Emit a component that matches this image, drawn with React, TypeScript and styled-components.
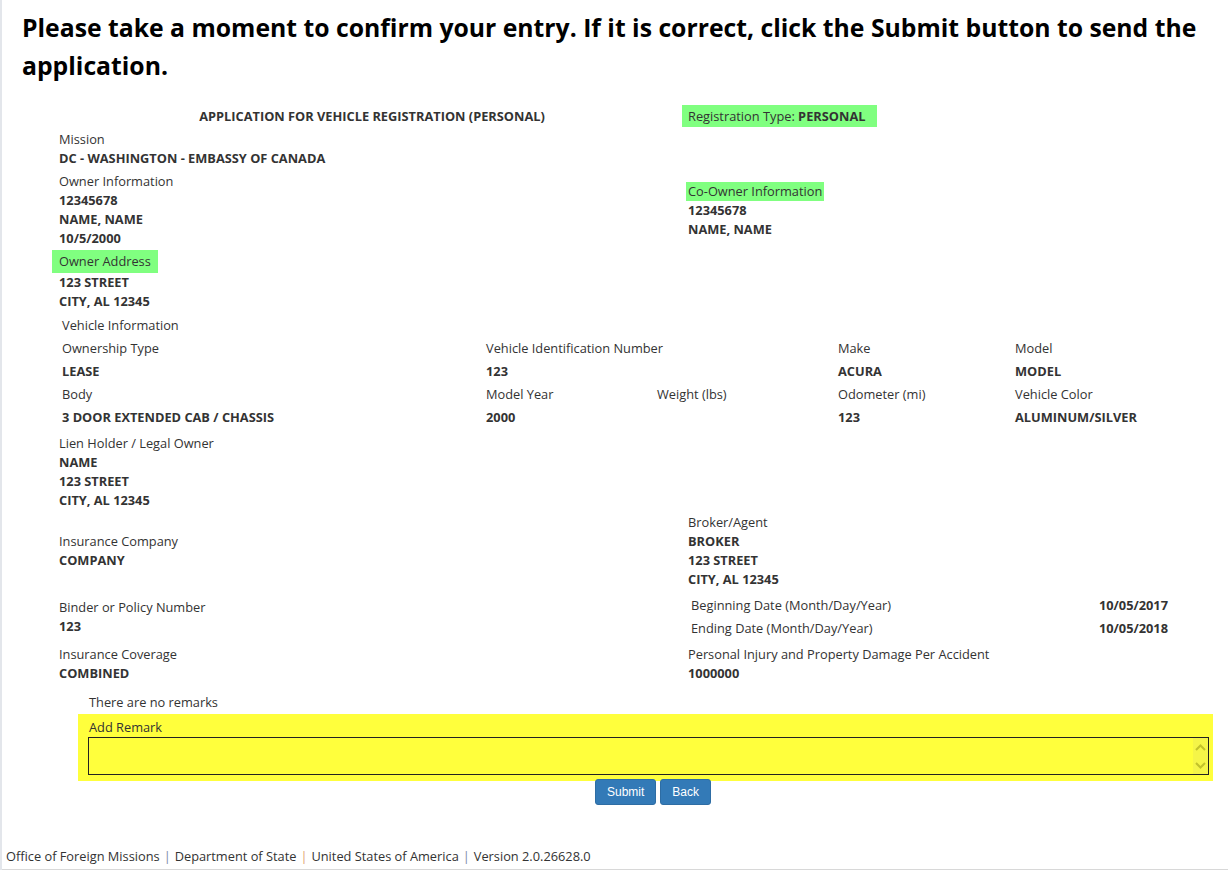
import React from 'react'
import styled, { createGlobalStyle } from 'styled-components'

const GlobalStyle = createGlobalStyle`
  html, body {
    margin: 0;
    padding: 0;
    background: #fff;
  }
  body {
    font-family: "Open Sans", "DejaVu Sans", sans-serif;
    font-size: 12.8px;
    color: #333;
  }
`

const Page = styled.div`
  min-height: 870px;
  box-sizing: border-box;
  border-left: 2px solid #e3e6eb;
  display: flex;
  flex-direction: column;
`

const Heading = styled.h2`
  margin: 0;
  padding: 9px 20px 0 20px;
  font-size: 24.75px;
  line-height: 38px;
  font-weight: 700;
  color: #000;
`

const Form = styled.div`
  padding: 20px 15px 0 50px;
`

const Row = styled.div<{ gap?: number }>`
  display: grid;
  grid-template-columns: 630px 1fr;
  align-items: center;
  margin-top: ${({ gap }) => gap ?? 4}px;
`

const Title = styled.div`
  text-align: center;
  font-weight: 700;
  padding-left: 10px;
  line-height: 22px;
`

const Group = styled.div<{ inset?: number }>`
  padding-left: ${({ inset }) => inset ?? 7}px;
  line-height: 19px;
`

const Label = styled.div`
  line-height: 19px;
`

const Value = styled.div`
  line-height: 19px;
  font-weight: 700;
`

const Highlight = styled.span<{ pad: string }>`
  display: inline-block;
  background: #80ff80;
  padding: ${({ pad }) => pad};
  line-height: 19px;
`

const HighlightLabel = styled.div<{ shift: number }>`
  margin-left: -${({ shift }) => shift}px;
`

const RegType = styled.span`
  display: inline-block;
  background: #80ff80;
  padding: 0 12px 0 6px;
  line-height: 22px;
  b {
    font-weight: 700;
  }
`

const VehicleTable = styled.div`
  display: grid;
  grid-template-columns: 424px 171px 181px 177px 1fr;
  margin-top: 3px;
  padding-left: 10px;
  grid-auto-rows: 23px;
  align-items: center;
`

const Cell = styled.div<{ span?: number; bold?: boolean }>`
  grid-column: span ${({ span }) => span ?? 1};
  font-weight: ${({ bold }) => (bold ? 700 : 400)};
  line-height: 19px;
`

const DateTable = styled.div`
  display: grid;
  grid-template-columns: 1fr auto;
  grid-auto-rows: 23px;
  align-items: center;
  width: 477px;
  padding-left: 3px;
`

const DateValue = styled.div`
  font-weight: 700;
  text-align: right;
`

const Remarks = styled.div`
  margin: 10px 0 0 87px;
  line-height: 19px;
`

const RemarkBox = styled.div`
  margin: 2px 0 0 76px;
  width: 1135px;
  box-sizing: border-box;
  background: #ffff3c;
  padding: 4px 4px 6px 10px;
`

const RemarkLabel = styled.div`
  padding-left: 1px;
  line-height: 19px;
`

const AreaWrap = styled.div`
  position: relative;
  height: 38px;
`

const RemarkArea = styled.textarea`
  display: block;
  width: 100%;
  height: 38px;
  box-sizing: border-box;
  border: 1px solid #222;
  background: transparent;
  resize: none;
  font: inherit;
  outline: none;
`

const ScrollStrip = styled.div`
  position: absolute;
  top: 1px;
  right: 1px;
  bottom: 1px;
  width: 15px;
  background: #f5f548;
  display: flex;
  flex-direction: column;
  align-items: center;
  justify-content: space-around;
`

const Buttons = styled.div`
  display: flex;
  justify-content: center;
  gap: 4px;
  padding-left: 76px;
  margin-top: -2px;
`

const Button = styled.button`
  font-family: "Liberation Sans", Arial, sans-serif;
  font-size: 12px;
  color: #fff;
  background: #337ab7;
  border: 1px solid #2e6da4;
  border-radius: 3px;
  height: 26px;
  padding: 0 11px;
  cursor: pointer;
`

const Footer = styled.div`
  margin-top: auto;
  padding: 0 0 4px 4px;
  line-height: 18px;
  border-bottom: 1px solid #d8d8d8;
`

const Sep = styled.span<{ tone: string }>`
  color: ${({ tone }) => tone};
  padding: 0 4px;
`

function Chevron({ up }: { up?: boolean }) {
  return (
    <svg width="11" height="7" viewBox="0 0 11 7">
      <path
        d={up ? 'M1 6 L5.5 1.5 L10 6' : 'M1 1 L5.5 5.5 L10 1'}
        fill="none"
        stroke="#c2c22a"
        strokeWidth="2"
      />
    </svg>
  )
}

export default function App() {
  return (
    <>
      <GlobalStyle />
      <Page>
        <Heading>
          Please take a moment to confirm your entry. If it is correct, click the Submit button to send the application.
        </Heading>
        <Form>
          <Row gap={0}>
            <Title>APPLICATION FOR VEHICLE REGISTRATION (PERSONAL)</Title>
            <div>
              <RegType>
                Registration Type: <b>PERSONAL</b>
              </RegType>
            </div>
          </Row>
          <Row gap={3}>
            <Group>
              <Label>Mission</Label>
              <Value>DC - WASHINGTON - EMBASSY OF CANADA</Value>
            </Group>
          </Row>
          <Row>
            <Group>
              <Label>Owner Information</Label>
              <Value>12345678</Value>
              <Value>NAME, NAME</Value>
              <Value>10/5/2000</Value>
            </Group>
            <Group inset={6}>
              <HighlightLabel shift={2}>
                <Highlight pad="0 2px">Co-Owner Information</Highlight>
              </HighlightLabel>
              <Value>12345678</Value>
              <Value>NAME, NAME</Value>
            </Group>
          </Row>
          <Row gap={2}>
            <Group>
              <HighlightLabel shift={7}>
                <Highlight pad="2px 7px">Owner Address</Highlight>
              </HighlightLabel>
              <Value>123 STREET</Value>
              <Value>CITY, AL 12345</Value>
            </Group>
          </Row>
          <VehicleTable>
            <Cell span={5}>Vehicle Information</Cell>
            <Cell>Ownership Type</Cell>
            <Cell span={2}>Vehicle Identification Number</Cell>
            <Cell>Make</Cell>
            <Cell>Model</Cell>
            <Cell bold>LEASE</Cell>
            <Cell bold span={2}>123</Cell>
            <Cell bold>ACURA</Cell>
            <Cell bold>MODEL</Cell>
            <Cell>Body</Cell>
            <Cell>Model Year</Cell>
            <Cell>Weight (lbs)</Cell>
            <Cell>Odometer (mi)</Cell>
            <Cell>Vehicle Color</Cell>
            <Cell bold>3 DOOR EXTENDED CAB / CHASSIS</Cell>
            <Cell bold>2000</Cell>
            <Cell bold></Cell>
            <Cell bold>123</Cell>
            <Cell bold>ALUMINUM/SILVER</Cell>
          </VehicleTable>
          <Row gap={5}>
            <Group>
              <Label>Lien Holder / Legal Owner</Label>
              <Value>NAME</Value>
              <Value>123 STREET</Value>
              <Value>CITY, AL 12345</Value>
            </Group>
          </Row>
          <Row gap={3}>
            <Group>
              <Label>Insurance Company</Label>
              <Value>COMPANY</Value>
            </Group>
            <Group inset={6}>
              <Label>Broker/Agent</Label>
              <Value>BROKER</Value>
              <Value>123 STREET</Value>
              <Value>CITY, AL 12345</Value>
            </Group>
          </Row>
          <Row gap={5}>
            <Group>
              <Label>Binder or Policy Number</Label>
              <Value>123</Value>
            </Group>
            <Group inset={6}>
              <DateTable>
                <div>Beginning Date (Month/Day/Year)</div>
                <DateValue>10/05/2017</DateValue>
                <div>Ending Date (Month/Day/Year)</div>
                <DateValue>10/05/2018</DateValue>
              </DateTable>
            </Group>
          </Row>
          <Row gap={5}>
            <Group>
              <Label>Insurance Coverage</Label>
              <Value>COMBINED</Value>
            </Group>
            <Group inset={6}>
              <Label>Personal Injury and Property Damage Per Accident</Label>
              <Value>1000000</Value>
            </Group>
          </Row>
        </Form>
        <Remarks>There are no remarks</Remarks>
        <RemarkBox>
          <RemarkLabel>Add Remark</RemarkLabel>
          <AreaWrap>
            <RemarkArea />
            <ScrollStrip>
              <Chevron up />
              <Chevron />
            </ScrollStrip>
          </AreaWrap>
        </RemarkBox>
        <Buttons>
          <Button>Submit</Button>
          <Button>Back</Button>
        </Buttons>
        <Footer>
          Office of Foreign Missions<Sep tone="#7a8aa8">|</Sep>Department of State<Sep tone="#e0a070">|</Sep>United
          States of America<Sep tone="#7a8aa8">|</Sep>Version 2.0.26628.0
        </Footer>
      </Page>
    </>
  )
}
